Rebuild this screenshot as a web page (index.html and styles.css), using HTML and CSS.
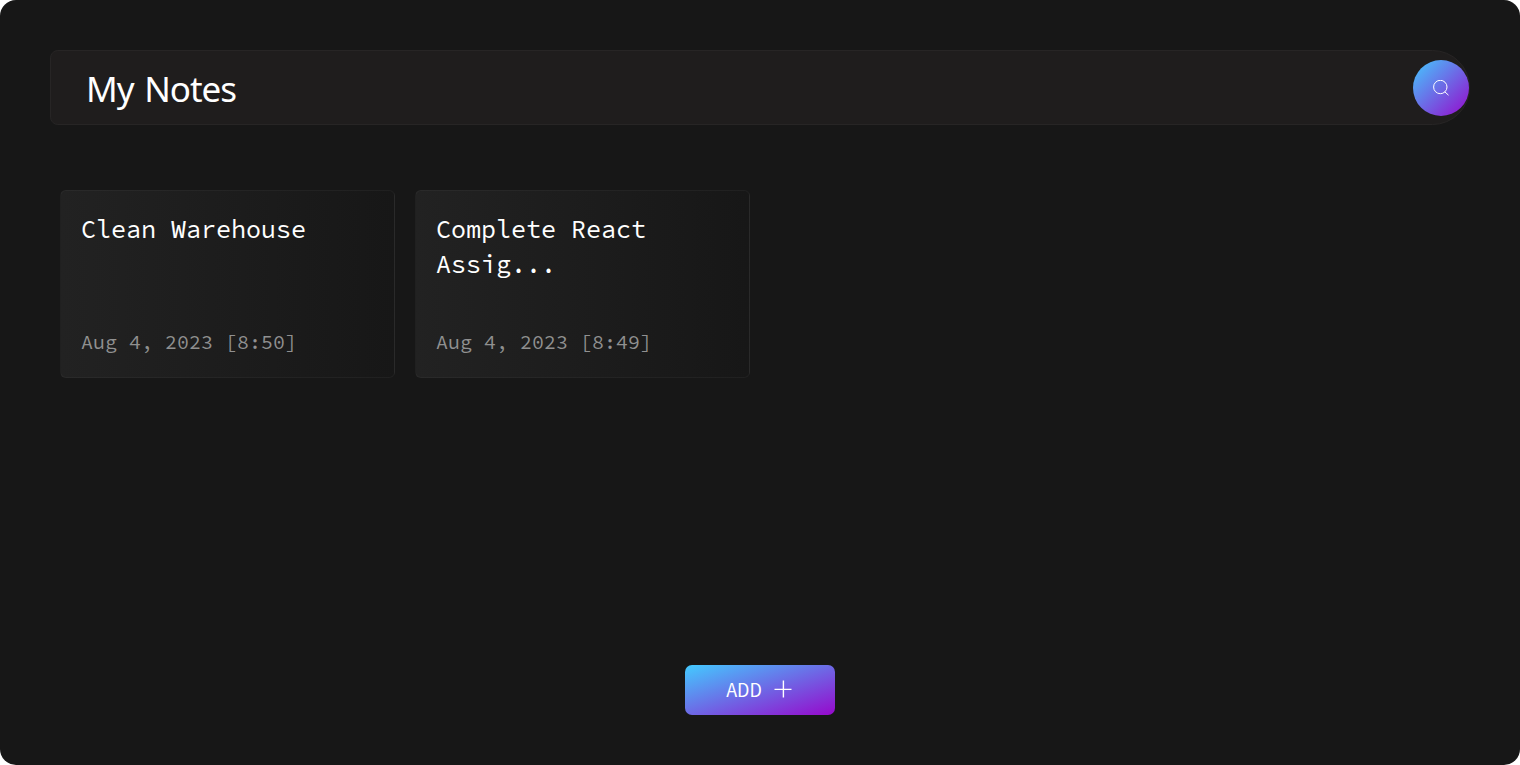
FILE: index.html
```html
<!DOCTYPE html>
<html lang="en">
<head>
<meta charset="utf-8">
<title>My Notes</title>
<link rel="stylesheet" href="styles.css">
</head>
<body>
<main class="app">
  <header class="topbar">
    <h1 class="title">My Notes</h1>
    <button class="search" aria-label="Search">
      <svg width="16" height="16" viewBox="0 0 16 16" fill="none" stroke="currentColor"><circle cx="7.3" cy="7" r="6.7"/><path d="M11.8 11.8 15.5 15.2"/></svg>
    </button>
  </header>
  <section class="notes">
    <article class="note">
      <h2 class="note-title">Clean Warehouse</h2>
      <p class="note-date">Aug 4, 2023 [8:50]</p>
    </article>
    <article class="note">
      <h2 class="note-title">Complete React Assig...</h2>
      <p class="note-date">Aug 4, 2023 [8:49]</p>
    </article>
  </section>
  <button class="add"><span class="add-label">ADD</span>
    <svg class="plus" width="18" height="18" viewBox="0 0 18 18" fill="none" stroke="currentColor" stroke-width="1.4"><path d="M9.4 .5v17M.5 9.4h17"/></svg>
  </button>
</main>
</body>
</html>
```
FILE: styles.css
```css
* { box-sizing: border-box; margin: 0; }
body { background: #fff; }
button { border: 0; padding: 0; color: #fff; }
.app {
  display: flex;
  flex-direction: column;
  height: 765px;
  padding: 50px;
  border-radius: 16px;
  background: #171717;
  color: #fff;
}
.topbar {
  display: flex;
  align-items: center;
  justify-content: space-between;
  height: 75px;
  padding-left: 35px;
  border: 1px solid #272525;
  border-radius: 8px 38px 38px 8px;
  background: #1f1d1d;
}
.title {
  font: 400 35px/48px "Noto Sans", sans-serif;
  letter-spacing: -1px;
  word-spacing: 2.5px;
  padding-top: 3px;
}
.search {
  display: flex;
  align-items: center;
  justify-content: center;
  width: 56px;
  height: 56px;
  border-radius: 50%;
  background: linear-gradient(135deg, #43cbff, #9708cc);
}
.notes {
  display: flex;
  gap: 20px;
  margin: 65px 10px 0;
}
.note {
  display: flex;
  flex-direction: column;
  justify-content: space-between;
  width: 335px;
  height: 188px;
  padding: 21px 20px 19px;
  border: 1px solid rgba(255, 255, 255, .04);
  border-radius: 6px;
  background: linear-gradient(90deg, #222, #171717);
  font-family: "Source Code Pro", "Noto Sans Mono CJK JP", "Liberation Mono", monospace;
}
.note-title { font-size: 25px; font-weight: 400; line-height: 35px; }
.note-date { font-size: 20px; line-height: 32px; color: #909090; }
.add {
  display: flex;
  align-items: center;
  justify-content: center;
  gap: 12px;
  width: 150px;
  height: 50px;
  margin: auto auto 0;
  padding: 0 2px 2px 0;
  border-radius: 7px;
  background: linear-gradient(to bottom right, #43cbff, #9708cc);
}
.add-label { font: 400 18px/28px "Noto Sans CJK JP", sans-serif; }
```
